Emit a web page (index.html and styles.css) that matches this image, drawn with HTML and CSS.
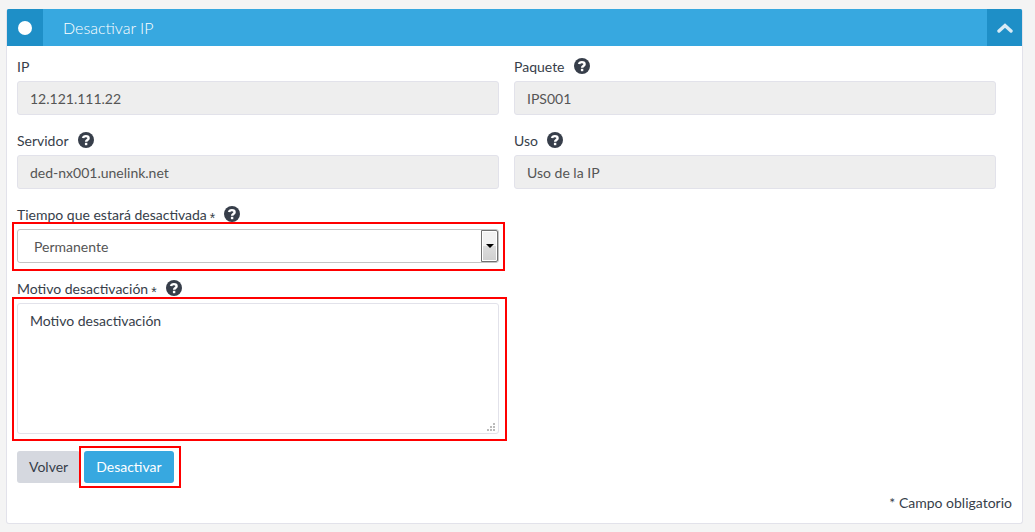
FILE: index.html
```html
<!DOCTYPE html>
<html lang="es">
<head>
    <meta charset="utf-8">
    <title>Desactivar IP</title>
    <link rel="stylesheet" href="styles.css">
</head>
<body>
    <svg class="sprite" aria-hidden="true">
        <symbol id="icon-help" viewBox="0 0 16 16">
            <circle cx="8" cy="8" r="8" fill="currentColor"/>
            <path d="M5 6.1C5.3 4.6 6.6 4.1 7.9 4.1c1.6 0 2.7.8 2.7 2.1 0 1.9-2.5 1.7-2.5 3.6" fill="none" stroke="#fff" stroke-width="2.4"/>
            <path d="M6.9 10.8h2.4v2.4H6.9z" fill="#fff"/>
        </symbol>
    </svg>

    <section class="panel">
        <header class="panel-header">
            <span class="panel-mark"><span class="dot"></span></span>
            <h1 class="panel-title">Desactivar IP</h1>
            <button type="button" class="panel-toggle" aria-label="Contraer">
                <svg width="16" height="12" viewBox="0 0 16 12"><path d="M2 9l6-5.500L14 9" fill="none" stroke="currentColor" stroke-width="3.4" stroke-linecap="round"/></svg>
            </button>
        </header>

        <form class="panel-body">
            <div class="fields">
                <div class="field">
                    <label for="ip">IP</label>
                    <input class="control" type="text" id="ip" value="12.121.111.22" readonly>
                </div>
                <div class="field">
                    <label for="paquete">Paquete <svg class="help"><use href="#icon-help"/></svg></label>
                    <input class="control" type="text" id="paquete" value="IPS001" readonly>
                </div>
                <div class="field">
                    <label for="servidor">Servidor <svg class="help"><use href="#icon-help"/></svg></label>
                    <input class="control" type="text" id="servidor" value="ded-nx001.unelink.net" readonly>
                </div>
                <div class="field">
                    <label for="uso">Uso <svg class="help"><use href="#icon-help"/></svg></label>
                    <input class="control" type="text" id="uso" value="Uso de la IP" readonly>
                </div>
                <div class="field first-column">
                    <label for="tiempo">Tiempo que estará desactivada <span class="required">*</span> <svg class="help"><use href="#icon-help"/></svg></label>
                    <div class="marked marked-select">
                        <select class="control" id="tiempo">
                            <option>Permanente</option>
                        </select>
                        <span class="select-arrow"></span>
                    </div>
                </div>
                <div class="field first-column">
                    <label for="motivo">Motivo desactivación <span class="required">*</span> <svg class="help"><use href="#icon-help"/></svg></label>
                    <div class="marked marked-textarea">
                        <textarea class="control" id="motivo">Motivo desactivación</textarea>
                    </div>
                </div>
            </div>

            <div class="actions">
                <button type="button" class="btn btn-default">Volver</button>
                <div class="marked marked-button">
                    <button type="submit" class="btn btn-primary">Desactivar</button>
                </div>
            </div>
            <p class="note">* Campo obligatorio</p>
        </form>
    </section>
</body>
</html>
```

FILE: styles.css
```css
* {
    box-sizing: border-box;
}
body {
    margin: 0;
    padding: 9px 12px 8px 6px;
    background: #f4f4f4;
    color: #373e4a;
    font-family: Lato, "Liberation Sans", sans-serif;
    font-size: 14px;
    line-height: 20px;
}
.sprite {
    display: none;
}

/* panel */
.panel {
    background: #fff;
    border: 1px solid #e2e2ea;
    border-top: 0;
    border-radius: 3px;
}
.panel-header {
    display: flex;
    height: 37px;
    background: #37a8e0;
    color: #fff;
    border-radius: 2px 2px 0 0;
    overflow: hidden;
}
.panel-mark,
.panel-toggle {
    display: flex;
    align-items: center;
    justify-content: center;
    width: 36px;
    background: #1e8fc7;
}
.dot {
    width: 14px;
    height: 14px;
    border-radius: 50%;
    background: #fff;
}
.panel-title {
    flex: 1;
    margin: 0;
    padding-left: 20px;
    font-size: 16px;
    font-weight: 300;
    line-height: 37px;
}
.panel-toggle {
    width: 35px;
    padding: 0;
    border: 0;
    color: #d8ebf5;
}
.panel-body {
    padding: 11px 10px 10px;
}

/* fields */
.fields {
    display: grid;
    grid-template-columns: 1fr 1fr;
    gap: 16px 15px;
    padding-right: 16px;
}
.first-column {
    grid-column: 1;
}
.field label {
    display: flex;
    align-items: center;
    height: 20px;
    margin-bottom: 4px;
}
.help {
    width: 16px;
    height: 16px;
    margin: 0 0 3px 9px;
}
.required {
    padding: 6px 0 0 3px;
    font-family: "Liberation Sans", sans-serif;
    font-size: 14px;
}
.control {
    display: block;
    width: 100%;
    height: 34px;
    margin: 0;
    padding: 6px 12px;
    border: 1px solid #e2e2ea;
    border-radius: 3px;
    background: #fff;
    color: #373e4a;
    font: inherit;
}
.control:read-only {
    color: #555;
}
input.control {
    background: #eee;
}
select.control {
    padding: 7px 16px 6px;
    border-color: #c4c4c4;
    background: #fff;
    color: #555;
    appearance: none;
}
textarea.control {
    height: 131px;
    padding: 7px 12px;
    resize: vertical;
}
textarea.control::-webkit-resizer {
    background:
        linear-gradient(#bbb, #bbb) 10px 5px / 2px 2px no-repeat,
        linear-gradient(#bbb, #bbb) 7px 8px / 2px 2px no-repeat,
        linear-gradient(#bbb, #bbb) 10px 8px / 2px 2px no-repeat,
        linear-gradient(#bbb, #bbb) 4px 11px / 2px 2px no-repeat,
        linear-gradient(#bbb, #bbb) 7px 11px / 2px 2px no-repeat,
        linear-gradient(#bbb, #bbb) 10px 11px / 2px 2px no-repeat;
}
.select-arrow {
    position: absolute;
    top: 1px;
    right: 1px;
    bottom: 1px;
    width: 17px;
    border: 1px solid #707070;
    border-radius: 0 2px 2px 0;
    box-shadow: inset 0 0 0 1px #fff;
    background: linear-gradient(#f2f2f2 50%, #dcdcdc 50%, #cfcfcf);
    pointer-events: none;
}
.select-arrow::after {
    content: "";
    position: absolute;
    top: 13px;
    left: 4px;
    border: 4px solid transparent;
    border-top-color: #000;
    border-bottom: 0;
}

/* red frames round the highlighted controls */
.marked {
    position: relative;
}
.marked::after {
    content: "";
    position: absolute;
    border: 2px solid #f00;
    pointer-events: none;
}
.marked-select::after {
    inset: -7px -6px -8px -5px;
}
.marked-textarea::after {
    inset: -6px -8px -7px -5px;
}
.marked-button::after {
    inset: -5px -7px -5px -5px;
}

/* footer */
.actions {
    display: flex;
    gap: 4px;
    margin-top: 17px;
}
.btn {
    display: block;
    height: 32px;
    padding: 6px 12px;
    border: 0;
    border-radius: 3px;
    font: inherit;
    cursor: pointer;
}
.btn-default {
    background: #d5d8df;
    color: #373e4a;
}
.btn-primary {
    background: #37a8e0;
    color: #fff;
}
.note {
    margin: 10px 0 0;
    text-align: right;
}
```
